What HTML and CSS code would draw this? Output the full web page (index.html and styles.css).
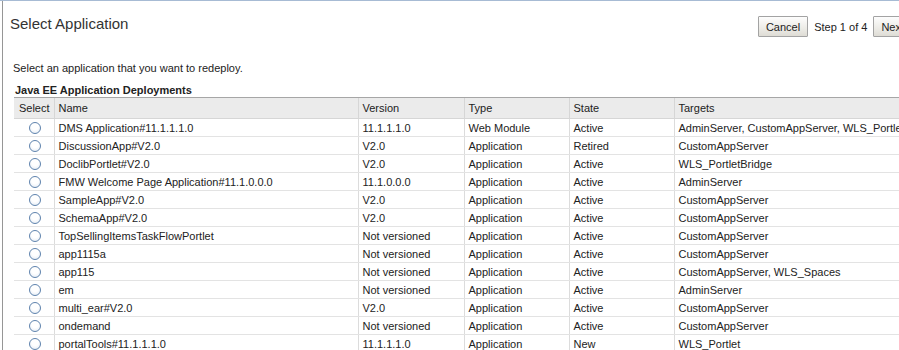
FILE: index.html
```html
<!DOCTYPE html>
<html lang="en">
<head>
    <meta charset="UTF-8">
    <title>Select Application</title>
    <link rel="stylesheet" href="styles.css">
</head>
<body>
    <div class="page">
        <div class="train-header">
            <h1>Select Application</h1>
            <div class="train-nav">
                <button class="btn">Cancel</button>
                <span class="step">Step 1 of 4</span>
                <button class="btn">Next</button>
            </div>
        </div>

        <p class="hint">Select an application that you want to redeploy.</p>

        <h2>Java EE Application Deployments</h2>
        <table class="deployments">
            <colgroup>
                <col class="c-select">
                <col class="c-name">
                <col class="c-version">
                <col class="c-type">
                <col class="c-state">
                <col class="c-targets">
            </colgroup>
            <thead>
                <tr>
                    <th class="sel">Select</th>
                    <th>Name</th>
                    <th>Version</th>
                    <th>Type</th>
                    <th>State</th>
                    <th>Targets</th>
                </tr>
            </thead>
            <tbody>
                <tr><td class="sel"><span class="radio"></span></td><td>DMS Application#11.1.1.1.0</td><td>11.1.1.1.0</td><td>Web Module</td><td>Active</td><td>AdminServer, CustomAppServer, WLS_Portlet</td></tr>
                <tr><td class="sel"><span class="radio"></span></td><td>DiscussionApp#V2.0</td><td>V2.0</td><td>Application</td><td>Retired</td><td>CustomAppServer</td></tr>
                <tr><td class="sel"><span class="radio"></span></td><td>DoclibPortlet#V2.0</td><td>V2.0</td><td>Application</td><td>Active</td><td>WLS_PortletBridge</td></tr>
                <tr><td class="sel"><span class="radio"></span></td><td>FMW Welcome Page Application#11.1.0.0.0</td><td>11.1.0.0.0</td><td>Application</td><td>Active</td><td>AdminServer</td></tr>
                <tr><td class="sel"><span class="radio"></span></td><td>SampleApp#V2.0</td><td>V2.0</td><td>Application</td><td>Active</td><td>CustomAppServer</td></tr>
                <tr><td class="sel"><span class="radio"></span></td><td>SchemaApp#V2.0</td><td>V2.0</td><td>Application</td><td>Active</td><td>CustomAppServer</td></tr>
                <tr><td class="sel"><span class="radio"></span></td><td>TopSellingItemsTaskFlowPortlet</td><td>Not versioned</td><td>Application</td><td>Active</td><td>CustomAppServer</td></tr>
                <tr><td class="sel"><span class="radio"></span></td><td>app1115a</td><td>Not versioned</td><td>Application</td><td>Active</td><td>CustomAppServer</td></tr>
                <tr><td class="sel"><span class="radio"></span></td><td>app115</td><td>Not versioned</td><td>Application</td><td>Active</td><td>CustomAppServer, WLS_Spaces</td></tr>
                <tr><td class="sel"><span class="radio"></span></td><td>em</td><td>Not versioned</td><td>Application</td><td>Active</td><td>AdminServer</td></tr>
                <tr><td class="sel"><span class="radio"></span></td><td>multi_ear#V2.0</td><td>V2.0</td><td>Application</td><td>Active</td><td>CustomAppServer</td></tr>
                <tr><td class="sel"><span class="radio"></span></td><td>ondemand</td><td>Not versioned</td><td>Application</td><td>Active</td><td>CustomAppServer</td></tr>
                <tr><td class="sel"><span class="radio"></span></td><td>portalTools#11.1.1.1.0</td><td>11.1.1.1.0</td><td>Application</td><td>New</td><td>WLS_Portlet</td></tr>
            </tbody>
        </table>
    </div>
</body>
</html>
```

FILE: styles.css
```css
/* General */
html, body {
    margin: 0;
    padding: 0;
    overflow: hidden;
}

body {
    font-family: "Liberation Sans", Arial, sans-serif;
    font-size: 11px;
    color: #222;
    background: #fff;
    border-top: 1px solid #a7bbd4;
}

.page {
    width: 960px;
    margin-left: 2px;
    border-left: 1px solid #969696;
    min-height: 400px;
}

/* Header with train buttons */
.train-header {
    display: flex;
    justify-content: space-between;
    align-items: center;
    height: 35px;
    padding: 0 51px 0 7px;
}

h1 {
    margin: 0;
    font-size: 15px;
    font-weight: normal;
    color: #333;
    padding-top: 9px;
}

.train-nav {
    display: flex;
    align-items: center;
    gap: 5px;
    padding-top: 16px;
}

.btn {
    font-family: inherit;
    font-size: 11px;
    color: #222;
    height: 21px;
    padding: 0 7px;
    border: 1px solid #a3a3a3;
    border-radius: 1px;
    background: linear-gradient(#fdfdfd, #ecebe6 60%, #dedcd5);
}

.step {
    font-size: 11px;
    padding: 0 1px;
}

.hint {
    margin: 26px 0 0 10px;
    line-height: 13px;
}

h2 {
    margin: 9px 0 0 12px;
    font-size: 11px;
    font-weight: bold;
    line-height: 13px;
    color: #222;
}

/* Deployments table */
.deployments {
    margin: 0 0 0 11px;
    border-collapse: collapse;
    table-layout: fixed;
    width: 940px;
    white-space: nowrap;
}

.c-select { width: 40px; }
.c-name { width: 304px; }
.c-version { width: 106px; }
.c-type { width: 105px; }
.c-state { width: 105px; }
.c-targets { width: 280px; }

.deployments th {
    background: #ebebeb;
    border-top: 1px solid #a6a6a6;
    border-left: 1px solid #d6d6d6;
    border-bottom: 1px solid #d6d6d6;
    font-weight: normal;
    text-align: left;
    height: 20px;
    padding: 0 0 0 4px;
}

.deployments td {
    height: 17px;
    padding: 0 0 0 4px;
    border-left: 1px solid #dcdcdc;
    border-bottom: 1px solid #e3e3e3;
    overflow: hidden;
}

.deployments th:first-child,
.deployments td:first-child {
    border-left: none;
}

.deployments th.sel {
    text-align: right;
    padding: 0 4px 0 0;
}

.deployments td.sel {
    text-align: center;
    padding: 0 3px 0 0;
}

.radio {
    display: inline-block;
    width: 10px;
    height: 10px;
    border: 1px solid #5f83ad;
    border-radius: 50%;
    background: radial-gradient(circle at 50% 35%, #ffffff 40%, #dfe8f2 100%);
    vertical-align: middle;
    margin-left: 5px;
}
```
